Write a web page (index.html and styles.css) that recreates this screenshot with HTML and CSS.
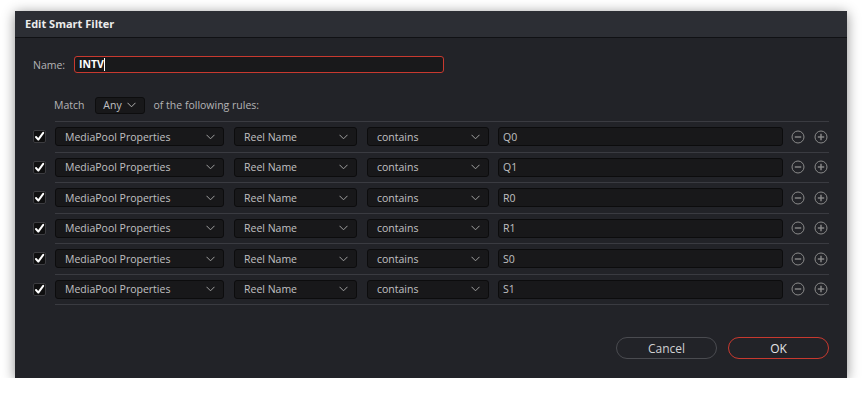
FILE: index.html
```html
<!DOCTYPE html>
<html>
<head>
<meta charset="utf-8">
<link rel="stylesheet" href="styles.css">
</head>
<body>
<div class="dialog">
  <div class="titlebar">Edit Smart Filter</div>
  <div class="content">
    <div class="name-row">
      <span class="label">Name:</span>
      <div class="name-input">INTV<span class="caret"></span></div>
    </div>
    <div class="match-row">
      <span class="label">Match</span>
      <div class="any-select">Any <svg class="chev" width="9" height="6" viewBox="0 0 9 6"><polyline points="0.5,0.8 4.5,4.8 8.5,0.8" fill="none" stroke="#b0b0b0" stroke-width="1"/></svg></div>
      <span class="label">of the following rules:</span>
    </div>
    <div class="rules" id="rules"></div>
    <div class="buttons">
      <div class="btn">Cancel</div>
      <div class="btn ok">OK</div>
    </div>
  </div>
</div>
<template id="rule-tpl">
  <div class="rule">
    <div class="check"><svg width="11" height="11" viewBox="0 0 11 11"><path d="M2 6 L4.3 8.6 L9.2 1.8" fill="none" stroke="#fff" stroke-width="2" stroke-linecap="round" stroke-linejoin="round"/></svg></div>
    <div class="fields">
      <div class="select s1"><span>MediaPool Properties</span><svg class="chev" width="9" height="6" viewBox="0 0 9 6"><polyline points="0.5,0.8 4.5,4.8 8.5,0.8" fill="none" stroke="#a0a0a0" stroke-width="1"/></svg></div>
      <div class="select s2"><span>Reel Name</span><svg class="chev" width="9" height="6" viewBox="0 0 9 6"><polyline points="0.5,0.8 4.5,4.8 8.5,0.8" fill="none" stroke="#a0a0a0" stroke-width="1"/></svg></div>
      <div class="select s3"><span>contains</span><svg class="chev" width="9" height="6" viewBox="0 0 9 6"><polyline points="0.5,0.8 4.5,4.8 8.5,0.8" fill="none" stroke="#a0a0a0" stroke-width="1"/></svg></div>
      <div class="value"></div>
      <svg class="icon" width="14" height="14" viewBox="0 0 14 14"><circle cx="7" cy="7" r="6" fill="none" stroke="#8a8a8a" stroke-width="1"/><line x1="3.8" y1="7" x2="10.2" y2="7" stroke="#8a8a8a" stroke-width="1.4"/></svg>
      <svg class="icon last" width="14" height="14" viewBox="0 0 14 14"><circle cx="7" cy="7" r="6" fill="none" stroke="#8a8a8a" stroke-width="1"/><line x1="3.8" y1="7" x2="10.2" y2="7" stroke="#8a8a8a" stroke-width="1.4"/><line x1="7" y1="3.8" x2="7" y2="10.2" stroke="#8a8a8a" stroke-width="1.4"/></svg>
    </div>
  </div>
</template>
<script>
  var vals = ["Q0","Q1","R0","R1","S0","S1"];
  var tpl = document.getElementById("rule-tpl");
  var host = document.getElementById("rules");
  vals.forEach(function(v){
    var n = tpl.content.cloneNode(true);
    n.querySelector(".value").textContent = v;
    host.appendChild(n);
  });
</script>
</body>
</html>
```
FILE: styles.css
```css
html, body {
  margin: 0;
  padding: 0;
  background: #ffffff;
}
body {
  font-family: "Open Sans", "Liberation Sans", sans-serif;
  font-size: 10.5px;
  color: #b4b4b6;
}
.dialog {
  margin: 11px 0 0 15px;
  width: 832px;
  height: 367px;
  background: #222328;
  box-shadow: 0 2px 12px rgba(0,0,0,0.45);
  display: flex;
  flex-direction: column;
}
.titlebar {
  height: 26px;
  line-height: 26px;
  background: #2c2e34;
  border-bottom: 1px solid #101114;
  padding-left: 10px;
  font-weight: bold;
  font-size: 11px;
  color: #ececec;
}
.content {
  flex: 1;
  display: flex;
  flex-direction: column;
}
.name-row {
  display: flex;
  align-items: center;
  margin-top: 17px;
  padding-left: 18px;
  height: 19px;
}
.name-row .label {
  width: 41px;
}
.name-input {
  width: 364px;
  height: 15px;
  line-height: 15px;
  background: #19191b;
  border: 1.5px solid #c8392f;
  border-radius: 3px;
  padding-left: 4px;
  color: #ffffff;
  font-weight: bold;
  display: flex;
  align-items: center;
}
.caret {
  display: inline-block;
  width: 1px;
  height: 13px;
  background: #ffffff;
}
.match-row {
  display: flex;
  align-items: center;
  margin-top: 22px;
  padding-left: 39px;
  height: 18px;
}
.any-select {
  margin-left: 10px;
  margin-right: 9px;
  width: 50px;
  height: 17px;
  box-sizing: border-box;
  background: #18181a;
  border: 1px solid #0d0d0e;
  border-radius: 3px;
  display: flex;
  align-items: center;
  justify-content: center;
  gap: 5px;
  color: #c0c0c2;
}
.rules {
  margin-top: 7px;
  padding-left: 18px;
}
.rule {
  display: flex;
  align-items: stretch;
}
.check {
  width: 13px;
  height: 13px;
  box-sizing: border-box;
  background: #0f0f10;
  border: 1px solid #3c3c40;
  border-radius: 2px;
  align-self: center;
  margin-top: 1px;
  margin-right: 9px;
  display: flex;
  align-items: center;
  justify-content: center;
  flex-shrink: 0;
}
.fields {
  width: 774px;
  height: 29.5px;
  border-top: 1px solid #3a3b41;
  display: flex;
  align-items: center;
}
.fields > * {
  flex-shrink: 0;
}
.rule:last-child .fields {
  border-bottom: 1px solid #3a3b41;
}
.select, .value {
  height: 19px;
  box-sizing: border-box;
  background: #18181a;
  border: 1px solid #0c0c0d;
  border-radius: 3px;
  display: flex;
  align-items: center;
  color: #c0c0c2;
  padding-left: 9px;
}
.select {
  justify-content: space-between;
  padding-right: 8px;
}
.s1 { width: 169px; margin-right: 10px; }
.s2 { width: 123px; margin-right: 10px; }
.s3 { width: 122px; margin-right: 9px; }
.value { width: 285px; padding-left: 4px; margin-right: 8px; }
.icon { margin-right: 9px; }
.icon.last { margin-right: 0; }
.buttons {
  margin-top: 32px;
  display: flex;
  justify-content: flex-end;
  gap: 11px;
  padding-right: 18px;
}
.btn {
  width: 101px;
  height: 22px;
  box-sizing: border-box;
  border: 1px solid #4a4b50;
  border-radius: 11px;
  display: flex;
  align-items: center;
  justify-content: center;
  font-size: 12px;
  color: #d0d0d2;
}
.btn.ok {
  border: 1.5px solid #c8392f;
  color: #e4e4e6;
}
```
